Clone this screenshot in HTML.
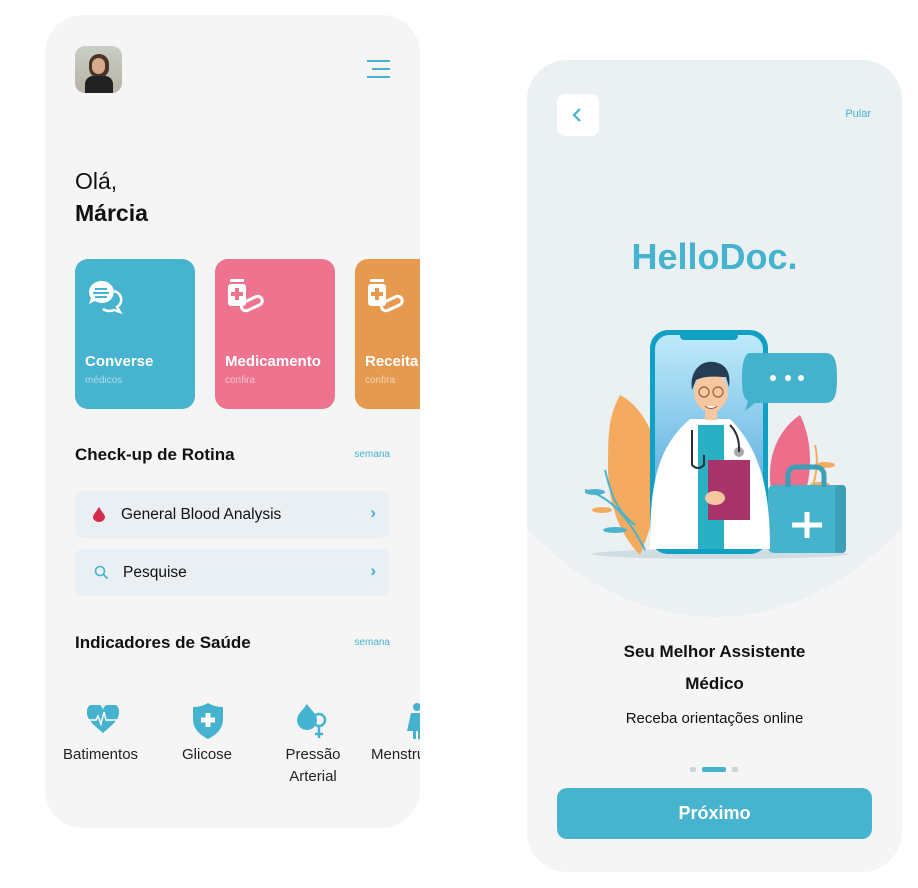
<!DOCTYPE html>
<html><head><meta charset="utf-8"><style>
*{margin:0;padding:0;box-sizing:border-box}
body{width:918px;height:888px;background:#fff;font-family:"Liberation Sans",sans-serif;position:relative;overflow:hidden;color:#111}
.abs{position:absolute}
.card{position:absolute;background:#f5f5f5;overflow:hidden}
.tile{position:absolute;top:244px;width:120px;height:150px;border-radius:13px;color:#fff}
.tile b{position:absolute;left:10px;top:94px;font-size:15px}
.tile span{position:absolute;left:10px;top:116px;font-size:10px;opacity:.55}
.tile svg{position:absolute;left:12px;top:20px}
.row{position:absolute;left:30px;width:315px;height:47px;background:#e9eff2;border-radius:8px;font-size:15.5px}
.h{position:absolute;left:30px;font-size:17px;font-weight:bold}
.sem{position:absolute;right:30px;font-size:10px;color:#45b3cf}
.ind{position:absolute;top:729px;font-size:15px;text-align:center;line-height:22px;color:#222}
</style></head><body>
<div class="card" style="left:45px;top:15px;width:375px;height:813px;border-radius:38px">
 <div class="abs" style="left:30px;top:31px;width:47px;height:47px;border-radius:10px;background:linear-gradient(#c9cfc6,#b8b2a6);overflow:hidden">
  <div class="abs" style="left:14px;top:8px;width:20px;height:24px;border-radius:10px;background:#4a3328"></div>
  <div class="abs" style="left:17px;top:12px;width:13px;height:16px;border-radius:7px;background:#d9a98c"></div>
  <div class="abs" style="left:10px;top:30px;width:28px;height:20px;border-radius:8px 8px 0 0;background:#222"></div>
 </div>
 <div class="abs" style="left:322px;top:45px;width:23px;height:2px;background:#45b3cf"></div>
 <div class="abs" style="left:327px;top:53px;width:18px;height:2px;background:#45b3cf"></div>
 <div class="abs" style="left:322px;top:61px;width:23px;height:2px;background:#45b3cf"></div>
 <div class="abs" style="left:30px;top:153px;font-size:23px">Olá,</div>
 <div class="abs" style="left:30px;top:185px;font-size:23px;font-weight:bold">Márcia</div>
 <div class="tile" style="left:30px;background:#46b3cf">
  <svg width="40" height="36" viewBox="0 0 40 36"><path d="M14 2a12 11 0 1 1-6 20l-6 3 2-6A12 11 0 0 1 14 2z" fill="#fff"/><path d="M27 12a10 9 0 0 1 3 16l3 5-6-2a10 9 0 0 1-11-1" fill="none" stroke="#fff" stroke-width="2.5"/><path d="M8 10h12M6 14h16M8 18h12" stroke="#46b3cf" stroke-width="2"/></svg>
  <b>Converse</b><span>médicos</span></div>
 <div class="tile" style="left:170px;background:#ee738f">
  <svg width="40" height="36" viewBox="0 0 40 36"><rect x="3" y="0" width="14" height="3" rx="1" fill="#fff"/><rect x="1" y="5" width="18" height="22" rx="3" fill="#fff"/><path d="M10 9v12M4 15h12" stroke="#ee738f" stroke-width="4"/><rect x="14" y="20" width="22" height="9" rx="4.5" transform="rotate(-25 25 25)" fill="none" stroke="#fff" stroke-width="3"/></svg>
  <b>Medicamento</b><span>confira</span></div>
 <div class="tile" style="left:310px;background:#e59a50">
  <svg width="40" height="36" viewBox="0 0 40 36"><rect x="3" y="0" width="14" height="3" rx="1" fill="#fff"/><rect x="1" y="5" width="18" height="22" rx="3" fill="#fff"/><path d="M10 9v12M4 15h12" stroke="#e59a50" stroke-width="4"/><rect x="14" y="20" width="22" height="9" rx="4.5" transform="rotate(-25 25 25)" fill="none" stroke="#fff" stroke-width="3"/></svg>
  <b>Receita</b><span>confira</span></div>
 <div class="h" style="top:430px">Check-up de Rotina</div><div class="sem" style="top:434px">semana</div>
 <div class="row" style="top:476px"><svg class="abs" style="left:18px;top:16px" width="12" height="15" viewBox="0 0 12 15"><path d="M6 0C3 5 0 8 0 10a6 5 0 0 0 12 0C12 8 9 5 6 0z" fill="#d62a4d"/></svg><span class="abs" style="left:46px;top:15px">General Blood Analysis</span><span class="abs" style="right:14px;top:12px;color:#45b3cf;font-size:17px;font-weight:bold">›</span></div>
 <div class="row" style="top:534px"><svg class="abs" style="left:19px;top:16px" width="15" height="15" viewBox="0 0 15 15"><circle cx="6" cy="6" r="4.5" fill="none" stroke="#45b3cf" stroke-width="1.6"/><path d="M9.5 9.5l4 4" stroke="#45b3cf" stroke-width="1.8"/></svg><span class="abs" style="left:48px;top:15px">Pesquise</span><span class="abs" style="right:14px;top:12px;color:#45b3cf;font-size:17px;font-weight:bold">›</span></div>
 <div class="h" style="top:618px">Indicadores de Saúde</div><div class="sem" style="top:622px">semana</div>
 <svg class="abs" style="left:42px;top:690px" width="32" height="28" viewBox="0 0 32 28"><path d="M16 28C8 21 0 15 0 8a8 8 0 0 1 16-3 8 8 0 0 1 16 3c0 7-8 13-16 20z" fill="#45b3cf"/><path d="M1 15h8l2-4 3 8 3-12 2 8h12" fill="none" stroke="#fff" stroke-width="1.5"/></svg>
 <svg class="abs" style="left:148px;top:688px" width="30" height="36" viewBox="0 0 30 36"><path d="M15 0c5 3 10 4 15 4v12c0 10-7 16-15 20C7 32 0 26 0 16V4c5 0 10-1 15-4z" fill="#45b3cf"/><path d="M15 10v14M8 17h14" stroke="#fff" stroke-width="5"/></svg>
 <svg class="abs" style="left:252px;top:689px" width="32" height="36" viewBox="0 0 32 36"><path d="M10 0C6 6 0 10 0 16a10 10 0 0 0 20 0C20 10 14 6 10 0z" fill="#45b3cf"/><circle cx="22" cy="16" r="6" fill="none" stroke="#45b3cf" stroke-width="2.5"/><path d="M22 22v12M18 30h8" stroke="#45b3cf" stroke-width="2.5"/></svg>
 <svg class="abs" style="left:362px;top:688px" width="20" height="36" viewBox="0 0 20 36"><circle cx="10" cy="4" r="4" fill="#45b3cf"/><path d="M4 10h12l4 18H0z M6 28h3v8H6zM11 28h3v8h-3z" fill="#45b3cf"/></svg>
 <div class="ind" style="left:18px">Batimentos</div>
 <div class="ind" style="left:137px">Glicose</div>
 <div class="ind" style="left:235px;width:66px">Pressão<br>Arterial</div>
 <div class="ind" style="left:326px;white-space:nowrap">Menstruação</div>
</div>

<div class="card" style="left:527px;top:60px;width:375px;height:812px;border-radius:40px">
 <div class="abs" style="left:-120px;top:-300px;width:615px;height:857px;border-radius:50%;background:#ebf0f2"></div>
 <div class="abs" style="left:30px;top:34px;width:42px;height:42px;background:#fff;border-radius:8px"><svg class="abs" style="left:15px;top:14px" width="10" height="14" viewBox="0 0 10 14"><path d="M8 1L2 7l6 6" fill="none" stroke="#45b3cf" stroke-width="2.2"/></svg></div>
 <div class="abs" style="right:31px;top:48px;font-size:11px;color:#45b3cf">Pular</div>
 <div class="abs" style="left:0;width:375px;top:176px;text-align:center;font-size:36px;font-weight:bold;color:#45b3cf">HelloDoc.</div>
 <svg class="abs" style="left:53px;top:260px" width="280" height="250" viewBox="0 0 280 250">
  <ellipse cx="140" cy="234" rx="128" ry="5" fill="#cfdde2"/>
  <path d="M40 75c20 10 40 40 38 80s-10 60-18 80c-20-20-32-50-32-90s2-50 12-70z" fill="#f4aa5f"/>
  <path d="M220 95c-15 10-30 30-30 60s10 40 15 55c15-20 25-40 25-70 0-20-5-35-10-45z" fill="#ec6e8b"/>
  <path d="M5 170c20 5 40 20 60 60M25 150c5 20 10 40 30 55" fill="none" stroke="#4cb3cd" stroke-width="2"/>
  <ellipse cx="15" cy="172" rx="10" ry="3" fill="#4cb3cd"/><ellipse cx="35" cy="210" rx="12" ry="3" fill="#4cb3cd"/><ellipse cx="22" cy="190" rx="10" ry="3" fill="#f4aa5f"/>
  <path d="M235 125c5 20 0 40-10 60" stroke="#f4aa5f" stroke-width="2" fill="none"/><ellipse cx="245" cy="145" rx="10" ry="3" fill="#f4aa5f"/><ellipse cx="240" cy="165" rx="10" ry="3" fill="#f4aa5f"/>
  <rect x="188" y="165" width="78" height="68" rx="6" fill="#46b3cd"/><rect x="255" y="165" width="11" height="68" rx="4" fill="#3b9fb8"/>
  <path d="M208 167v-12a8 8 0 0 1 8-8h20a8 8 0 0 1 8 8v12" fill="none" stroke="#3b9fb8" stroke-width="5"/>
  <path d="M212 205h30M227 192v26" stroke="#fff" stroke-width="5"/>
  <rect x="70" y="10" width="118" height="224" rx="18" fill="#0fa0c3"/>
  <rect x="75" y="15" width="108" height="214" rx="14" fill="url(#g)"/>
  <defs><linearGradient id="g" x1="0" y1="0" x2="0" y2="1"><stop offset="0" stop-color="#bfeafa"/><stop offset="1" stop-color="#3b9ad6"/></linearGradient></defs>
  <rect x="100" y="12" width="58" height="8" rx="4" fill="#0fa0c3"/>
  <path d="M170 33h75c10 0 12 8 12 25s-2 25-12 25h-70l-10 8 3-10c-5-3-6-10-6-23s2-25 8-25z" fill="#45b2cd"/>
  <circle cx="193" cy="58" r="3" fill="#fff"/><circle cx="208" cy="58" r="3" fill="#fff"/><circle cx="221" cy="58" r="3" fill="#fff"/>
  <path d="M70 229c0-60 5-100 40-130h40c30 30 40 70 40 130z" fill="#fff"/>
  <rect x="118" y="105" width="26" height="124" fill="#2ab0c4"/>
  <rect x="125" y="80" width="12" height="20" fill="#f7c7a1"/>
  <ellipse cx="131" cy="72" rx="17" ry="20" fill="#f7c7a1"/>
  <path d="M112 70c-3-20 10-30 22-28s17 10 15 25l-3-10c-8 0-20-2-30 3z" fill="#263c55"/>
  <circle cx="124" cy="72" r="5" fill="none" stroke="#a05a3a" stroke-width="1.2"/><circle cx="138" cy="72" r="5" fill="none" stroke="#a05a3a" stroke-width="1.2"/>
  <path d="M125 86q6 5 12 0" fill="#fff" stroke="#a05a3a"/>
  <path d="M112 110v35q6 6 12 0v-10" fill="none" stroke="#2e2e38" stroke-width="2"/><circle cx="159" cy="132" r="5" fill="#aaa"/><path d="M150 105q10 10 9 27" fill="none" stroke="#2e2e38" stroke-width="2"/>
  <rect x="128" y="140" width="42" height="60" fill="#a8346a"/>
  <ellipse cx="135" cy="178" rx="10" ry="7" fill="#f7c7a1"/>
 </svg>
 <div class="abs" style="left:0;width:375px;top:576px;text-align:center;font-size:17px;font-weight:bold;line-height:32px">Seu Melhor Assistente<br>Médico</div>
 <div class="abs" style="left:0;width:375px;top:650px;text-align:center;font-size:15px">Receba orientações online</div>
 <div class="abs" style="left:163px;top:707px;width:6px;height:5px;border-radius:2px;background:#c9d3d7"></div>
 <div class="abs" style="left:175px;top:707px;width:24px;height:5px;border-radius:2px;background:#45b3cf"></div>
 <div class="abs" style="left:205px;top:707px;width:6px;height:5px;border-radius:2px;background:#c9d3d7"></div>
 <div class="abs" style="left:30px;top:728px;width:315px;height:51px;border-radius:10px;background:#46b3cf;color:#fff;font-size:18px;font-weight:bold;text-align:center;line-height:51px">Próximo</div>
</div>
</body></html>
